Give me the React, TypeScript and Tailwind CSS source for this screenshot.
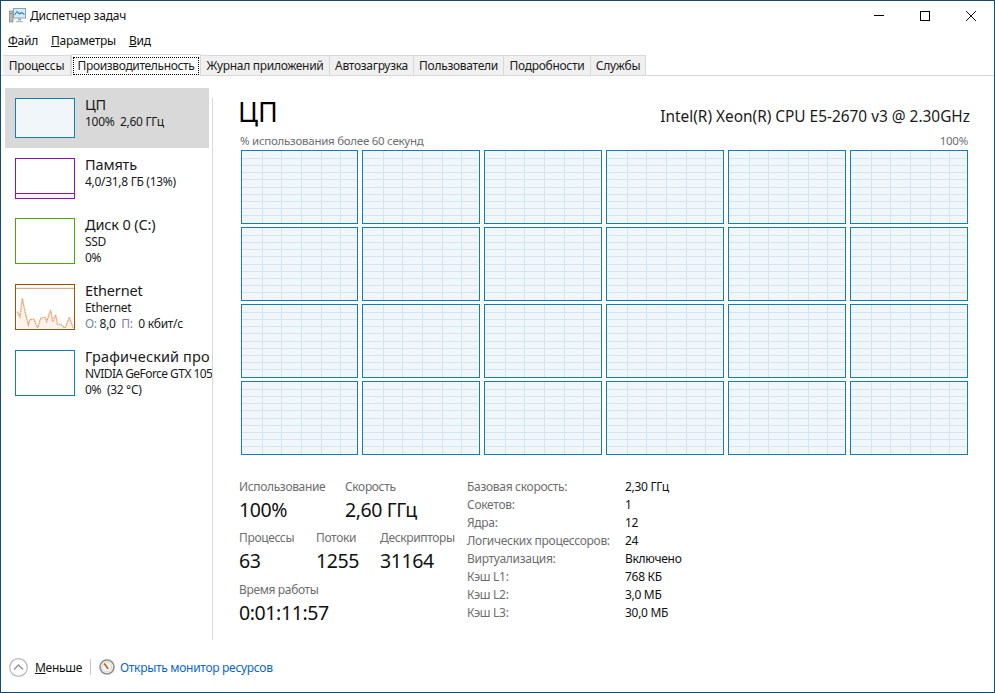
import { Fragment } from 'react';

const tabs = [
  { label: 'Процессы', width: 'w-[68px]' },
  { label: 'Производительность', width: 'w-[130px]', active: true },
  { label: 'Журнал приложений', width: 'w-[129px]' },
  { label: 'Автозагрузка', width: 'w-[84px]' },
  { label: 'Пользователи', width: 'w-[90px]' },
  { label: 'Подробности', width: 'w-[87px]' },
  { label: 'Службы', width: 'w-[55px]' },
];

const specs = [
  ['Базовая скорость:', '2,30 ГГц'],
  ['Сокетов:', '1'],
  ['Ядра:', '12'],
  ['Логических процессоров:', '24'],
  ['Виртуализация:', 'Включено'],
  ['Кэш L1:', '768 КБ'],
  ['Кэш L2:', '3,0 МБ'],
  ['Кэш L3:', '30,0 МБ'],
];

const hLines = [7.5, 14.5, 21.5, 28.5, 36.5, 43.5, 50.5, 57.5, 64.5];
const vLines = [20.5, 39.5, 59.5, 79.5, 98.5];

function AppIcon() {
  return (
    <svg width="17" height="15" viewBox="0 0 17 15" className="mr-[4px]">
      <rect x="0.5" y="3" width="3.5" height="11" fill="#b9bdb5" stroke="#7c8278" strokeWidth="0.7" />
      <rect x="1.2" y="5" width="2" height="1" fill="#5fae4c" />
      <rect x="4.5" y="0.5" width="12" height="9.5" fill="#d6ecfa" stroke="#8aa2b4" />
      <path d="M5.5 7 L8 3.5 L10.5 6 L12.5 4.5 L15.5 6.5" fill="none" stroke="#2f86cf" strokeWidth="1.1" />
      <path d="M9 10.5h3v2H9z" fill="#9ca6ad" />
      <path d="M7 13h7v1.2H7z" fill="#b5bcc1" />
    </svg>
  );
}

function WindowButton({ children }: { children: React.ReactNode }) {
  return <div className="flex h-[29px] w-[46px] items-center justify-center">{children}</div>;
}

function CoreCell() {
  return (
    <div className="h-[74px] overflow-hidden border border-[#117dbb] bg-[#f1f6fa]">
      <svg width="116" height="72" viewBox="0 0 116 72" className="block" shapeRendering="crispEdges">
        {hLines.map((y) => (
          <line key={y} x1="0" x2="115" y1={y} y2={y} stroke="#d3e5f1" />
        ))}
        {vLines.map((x) => (
          <line key={x} x1={x} x2={x} y1="0" y2="72" stroke="#d3e5f1" />
        ))}
      </svg>
    </div>
  );
}

function EthernetChart() {
  const pts =
    '22,95 30,110 37,55 45,95 55,135 60,118 72,118 83,145 92,115 105,112 110,125 122,90 128,125 137,105 142,132 155,135 165,145 178,112 190,145';
  return (
    <svg width="58" height="43" viewBox="18 15 174 129" className="block">
      <line x1="18" x2="192" y1="25" y2="25" stroke="#c98d5f" strokeWidth="2.6" />
      <polygon points={`22,144 ${pts} 190,144`} fill="#fcf3ec" />
      <polyline points={pts} fill="none" stroke="#e8a678" strokeWidth="4" strokeDasharray="6 1.5" />
    </svg>
  );
}

function SideItem({
  title,
  lines,
  border,
  thumb,
  active,
  tall,
  children,
}: {
  title: React.ReactNode;
  lines: React.ReactNode[];
  border: string;
  thumb: string;
  active?: boolean;
  tall?: boolean;
  children?: React.ReactNode;
}) {
  return (
    <div className={`flex w-[204px] pl-[10px] pt-[10px] ${tall ? 'h-[66px]' : 'h-[60px]'} ${active ? 'bg-[#d9d9d9]' : ''}`}>
      <div className={`w-[60px] shrink-0 border ${thumb} ${border}`}>{children}</div>
      <div className="-mt-[3px] ml-[10px] whitespace-pre">
        <div className="h-[19px] text-[14.5px] leading-[18px] tracking-[-0.15px] text-[#1a1a1a]">{title}</div>
        {lines.map((line, i) => (
          <div key={i} className="h-[16px] text-[12px] leading-[16px] tracking-[-0.3px] text-[#1a1a1a]">
            {line}
          </div>
        ))}
      </div>
    </div>
  );
}

function Stat({ label, value, width }: { label: string; value: string; width?: string }) {
  return (
    <div className={width}>
      <div className="h-[16px] whitespace-nowrap text-[12px] leading-[16px] tracking-[-0.35px] text-[#6d6d6d]">{label}</div>
      <div className="mt-[1px] h-[28px] text-[19.5px] leading-[28px] tracking-[-0.4px] text-[#111]">{value}</div>
    </div>
  );
}

export default function App() {
  return (
    <div className="flex h-[693px] w-[995px] flex-col border border-[#18496f] bg-white font-['Noto_Sans','Liberation_Sans',sans-serif] text-black">
      <div className="flex h-[29px] items-center">
        <div className="ml-[8px] flex flex-1 items-center text-[12px] tracking-[-0.2px] text-[#111]">
          <AppIcon />
          <span className="mt-[1px]">Диспетчер задач</span>
        </div>
        <WindowButton>
          <div className="h-px w-[10px] bg-black" />
        </WindowButton>
        <WindowButton>
          <div className="h-[10px] w-[10px] border border-black" />
        </WindowButton>
        <WindowButton>
          <svg width="10" height="10" viewBox="0 0 10 10">
            <path d="M0 0L10 10M10 0L0 10" stroke="#111" strokeWidth="1" />
          </svg>
        </WindowButton>
      </div>

      <div className="flex h-[21px] items-center pt-[1px] text-[12px] tracking-[-0.25px] text-[#111]">
        <span className="ml-[7px] w-[43px]">
          <span className="underline">Ф</span>айл
        </span>
        <span className="w-[78px]">
          <span className="underline">П</span>араметры
        </span>
        <span>
          <span className="underline">В</span>ид
        </span>
      </div>

      <div className="flex h-[25px] items-end border-b border-[#d9d9d9] pl-[2px] text-[12px] tracking-[-0.3px] text-[#1a1a1a]">
        {tabs.map((tab) => (
          <Fragment key={tab.label}>
            {tab.active ? (
              <div className={`${tab.width} relative z-10 -mb-px flex h-[22px] items-center justify-center border border-b-0 border-[#d9d9d9] bg-white`}>
                <span className="flex h-[18px] w-[126px] items-center justify-center whitespace-nowrap tracking-[-0.35px] outline-1 -outline-offset-1 outline-dotted outline-black">
                  {tab.label}
                </span>
              </div>
            ) : (
              <div className={`${tab.width} flex h-[20px] items-center justify-center whitespace-nowrap border border-b-0 border-l-0 border-[#d9d9d9] bg-[#f0f0f0]`}>
                {tab.label}
              </div>
            )}
          </Fragment>
        ))}
      </div>

      <div className="flex min-h-0 flex-1">
        <div className="w-[211px] shrink-0 overflow-hidden pl-[4px] pt-[12px]">
          <SideItem title="ЦП" lines={['100%  2,60 ГГц']} border="border-[#117dbb]" thumb="h-[40px] bg-[#f1f6fa]" active />
          <SideItem title="Память" lines={['4,0/31,8 ГБ (13%)']} border="border-[#8b12ae]" thumb="h-[41px]">
            <div className="mt-[34px] h-[5px] border-t border-[#8b12ae] bg-[#f4f2f4]" />
          </SideItem>
          <SideItem title="Диск 0 (C:)" lines={['SSD', '0%']} border="border-[#4da60c]" thumb="h-[46px]" tall />
          <SideItem
            title="Ethernet"
            lines={[
              'Ethernet',
              <>
                <span className="text-[#6d8aa8]">О:</span> 8,0  <span className="text-[#8a7aa8]">П:</span>  0 кбит/с
              </>,
            ]}
            border="border-[#a74f01]"
            thumb="h-[46px]"
            tall
          >
            <EthernetChart />
          </SideItem>
          <SideItem
            title={<span className="tracking-[0.12px]">Графический про</span>}
            lines={[<span className="tracking-[-0.55px]">NVIDIA GeForce GTX 105</span>, '0%  (32 °C)']}
            border="border-[#117dbb]"
            thumb="h-[46px]"
            tall
          />
        </div>
        <div className="mt-[22px] h-[542px] w-px shrink-0 bg-[#d9d9d9]" />

        <div className="flex-1 pl-[26px] pr-[24px]">
          <div className="mt-[18px] flex h-[36px] items-center justify-between">
            <span className="-ml-[1px] text-[27px] leading-[36px] text-black">ЦП</span>
            <span className="mt-[10px] text-[15.4px] text-[#1a1a1a]">Intel(R) Xeon(R) CPU E5-2670 v3 @ 2.30GHz</span>
          </div>
          <div className="ml-[1px] mr-[2px] mt-[3px] flex h-[16px] justify-between text-[11.5px] leading-[16px] tracking-[-0.26px] text-[#6d6d6d]">
            <span>% использования более 60 секунд</span>
            <span>100%</span>
          </div>
          <div className="ml-[2px] mt-[1px] grid w-[727px] grid-cols-[117px_118px_118px_118px_118px_118px] gap-x-[4px] gap-y-[3px]">
            {Array.from({ length: 24 }, (_, i) => (
              <CoreCell key={i} />
            ))}
          </div>

          <div className="mt-[24px] flex">
            <div className="w-[228px]">
              <div className="flex">
                <Stat label="Использование" value="100%" width="w-[106px]" />
                <Stat label="Скорость" value="2,60 ГГц" />
              </div>
              <div className="mt-[6px] flex">
                <Stat label="Процессы" value="63" width="w-[77px]" />
                <Stat label="Потоки" value="1255" width="w-[64px]" />
                <Stat label="Дескрипторы" value="31164" />
              </div>
              <div className="mt-[7px]">
                <Stat label="Время работы" value="0:01:11:57" />
              </div>
            </div>
            <div className="-mt-[1px] grid grid-cols-[158px_auto] auto-rows-[18px] text-[12px] leading-[18px] tracking-[-0.3px]">
              {specs.map(([label, value]) => (
                <Fragment key={label}>
                  <span className="whitespace-nowrap text-[#6d6d6d]">{label}</span>
                  <span className="text-[#111]">{value}</span>
                </Fragment>
              ))}
            </div>
          </div>
        </div>
      </div>

      <div className="flex h-[50px] items-center pl-[8px] text-[12px] tracking-[-0.3px]">
        <svg width="19" height="19" viewBox="0 0 19 19">
          <circle cx="9.5" cy="9.5" r="8.8" fill="none" stroke="#b5b5b5" strokeWidth="1.2" />
          <path d="M5 11.5L9.5 7L14 11.5" fill="none" stroke="#8f8f8f" strokeWidth="1.3" />
        </svg>
        <span className="ml-[7px] mt-[2px] w-[55px] text-[#111]">
          <span className="underline">М</span>еньше
        </span>
        <div className="h-[16px] w-px bg-[#c8c8c8]" />
        <svg width="16" height="16" viewBox="0 0 16 16" className="ml-[8px]">
          <circle cx="8" cy="8" r="7" fill="#f2efe9" stroke="#8f8f8f" strokeWidth="1.6" />
          <circle cx="8" cy="8" r="4.6" fill="#fbfaf7" stroke="#c9c4ba" strokeWidth="0.6" />
          <path d="M5.2 4.6L9.2 10" stroke="#c8561c" strokeWidth="1.6" />
        </svg>
        <span className="ml-[5px] mt-[2px] text-[#0a66cc]">Открыть монитор ресурсов</span>
      </div>
    </div>
  );
}
